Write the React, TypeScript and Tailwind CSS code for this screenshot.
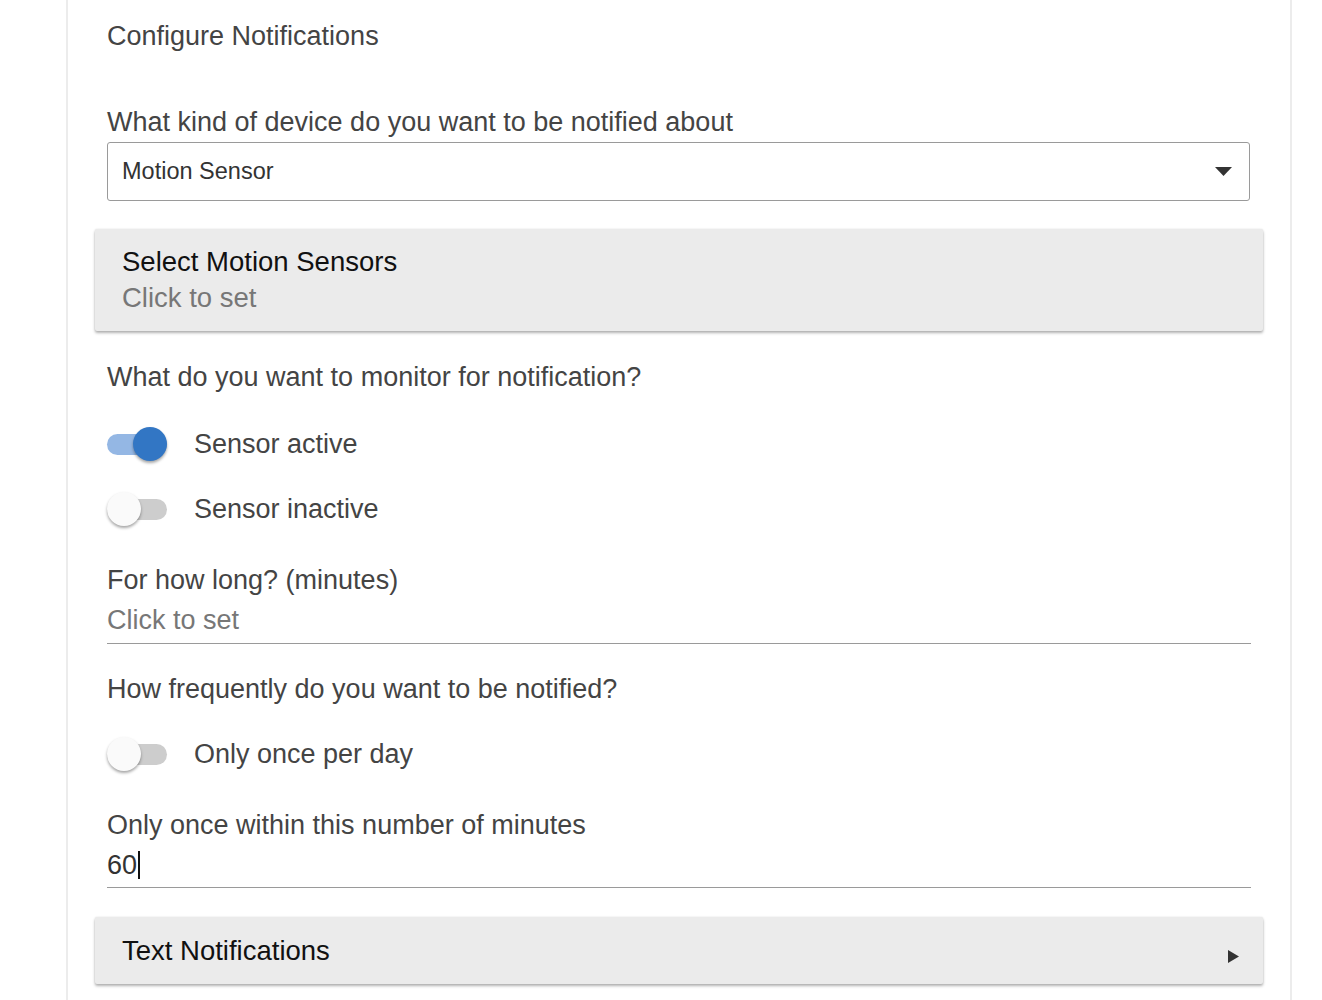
import React from "react";

const font = { fontFamily: "'Liberation Sans', Arial, Helvetica, sans-serif" };

function Toggle({ on }: { on: boolean }) {
  return (
    <div className="relative w-[60px] h-[40px] flex items-center shrink-0">
      <div className={`w-[60px] h-[21px] rounded-full ${on ? "bg-[#94b7e4]" : "bg-[#cdcdcd]"}`} />
      <div
        className={`absolute top-[3px] w-[34px] h-[34px] rounded-full shadow-[0_2px_3px_rgba(0,0,0,0.35)] ${
          on ? "right-0 bg-[#3276c4]" : "left-0 bg-[#fafafa]"
        }`}
      />
    </div>
  );
}

function ToggleRow({ on, label, className }: { on: boolean; label: string; className: string }) {
  return (
    <div className={`flex items-center h-[40px] ${className}`}>
      <Toggle on={on} />
      <span className="ml-[27px] text-[27px] leading-[28px] text-[#444]">{label}</span>
    </div>
  );
}

function Label({ children, className }: { children: React.ReactNode; className: string }) {
  return <div className={`text-[27px] leading-[28px] text-[#444] ${className}`}>{children}</div>;
}

export default function App() {
  return (
    <div className="min-h-[1000px] bg-white" style={font}>
      <div className="ml-[66px] w-[1226px] min-h-[1000px] border-x-2 border-[#ececec] px-[39px] pt-[22px]">
        <div className="text-[27px] leading-[28px] text-[#444]">Configure Notifications</div>

        <Label className="mt-[58px]">What kind of device do you want to be notified about</Label>
        <div className="mt-[6px] mr-[1px] h-[59px] border border-[#9a9a9a] rounded-[3px] flex items-center justify-between pl-[14px] pr-[17px]">
          <span className="text-[23.5px] text-[#333]">Motion Sensor</span>
          <svg width="17" height="9" viewBox="0 0 17 9">
            <path d="M0 0 L17 0 L8.5 9 Z" fill="#333" />
          </svg>
        </div>

        <div className="-mx-[12px] mt-[28px] bg-[#ebebeb] rounded-[2px] shadow-[0_2px_3px_rgba(0,0,0,0.3),0_0_2px_rgba(0,0,0,0.1)] px-[27px] py-[15px]">
          <div className="text-[27.5px] leading-[36px] text-[#111]">Select Motion Sensors</div>
          <div className="text-[27.5px] leading-[36px] text-[#777]">Click to set</div>
        </div>

        <Label className="mt-[32px]">What do you want to monitor for notification?</Label>
        <ToggleRow on={true} label="Sensor active" className="mt-[33px]" />
        <ToggleRow on={false} label="Sensor inactive" className="mt-[25px]" />

        <Label className="mt-[37px]">For how long? (minutes)</Label>
        <div className="mt-[12px] pb-[9px] border-b border-[#9a9a9a]">
          <div className="text-[27px] leading-[28px] text-[#777]">Click to set</div>
        </div>

        <Label className="mt-[31px]">How frequently do you want to be notified?</Label>
        <ToggleRow on={false} label="Only once per day" className="mt-[31px]" />

        <Label className="mt-[37px]">Only once within this number of minutes</Label>
        <div className="mt-[12px] pb-[8px] border-b border-[#9a9a9a]">
          <div className="flex items-center text-[27px] leading-[28px] text-[#333]">
            <span>60</span>
            <span className="ml-[1px] w-[1.5px] h-[28px] bg-[#111]" />
          </div>
        </div>

        <div className="-mx-[12px] mt-[29px] h-[67px] bg-[#ebebeb] rounded-[2px] shadow-[0_2px_3px_rgba(0,0,0,0.3),0_0_2px_rgba(0,0,0,0.1)] pl-[27px] pr-[24px] flex items-center justify-between">
          <span className="text-[27.5px] leading-[28px] text-[#111]">Text Notifications</span>
          <svg width="11" height="13" viewBox="0 0 11 13" className="mt-[12px]">
            <path d="M0 0 L11 6.5 L0 13 Z" fill="#333" />
          </svg>
        </div>
      </div>
    </div>
  );
}
